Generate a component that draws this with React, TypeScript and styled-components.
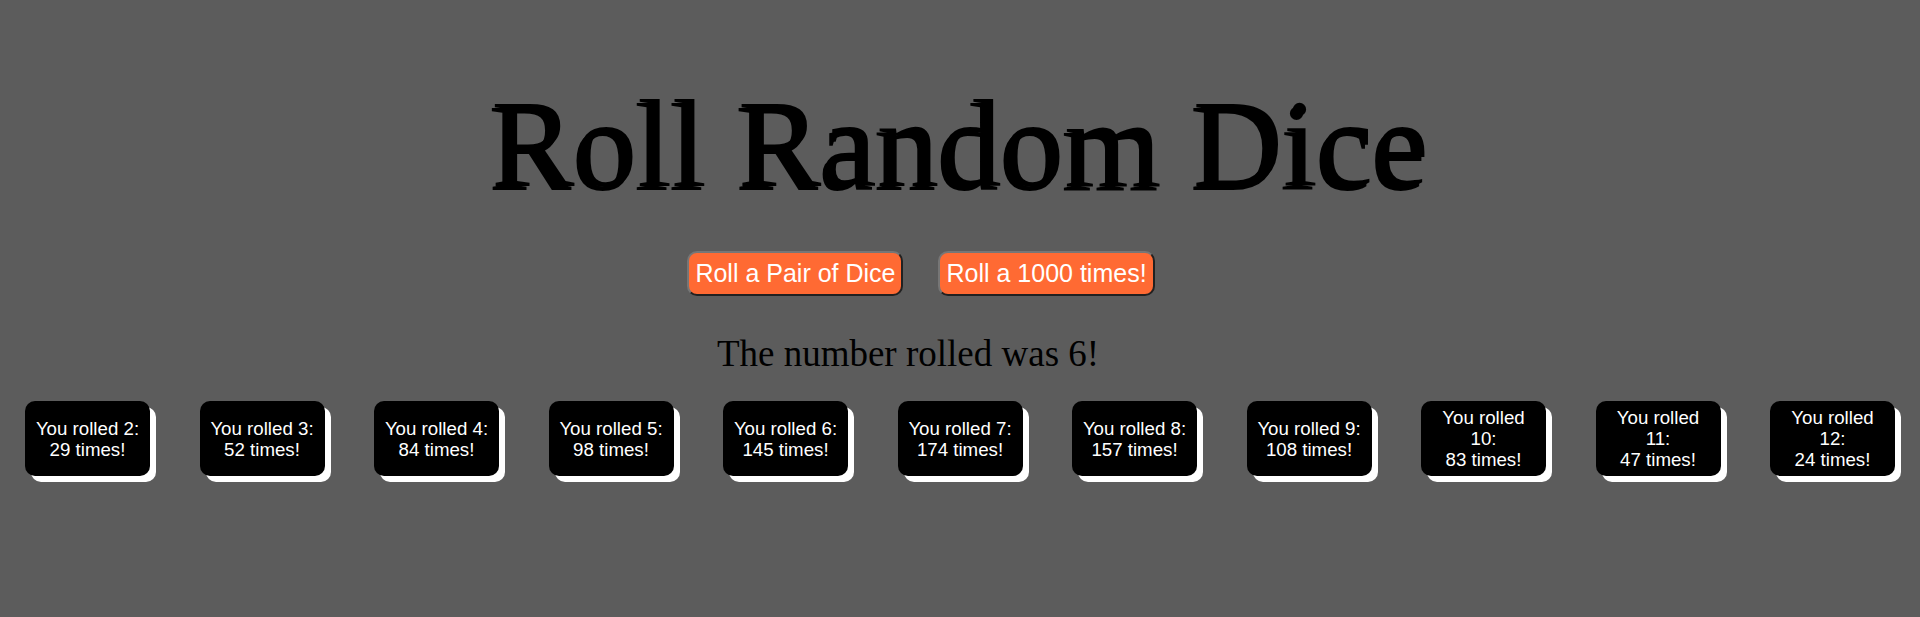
import styled, { createGlobalStyle } from "styled-components";

const GlobalStyle = createGlobalStyle`
  body {
    margin: 0;
    background-color: #5c5c5c;
    font-family: "Liberation Serif", "Times New Roman", serif;
  }
`;

const rolls: Array<{ sum: number; count: number }> = [
  { sum: 2, count: 29 },
  { sum: 3, count: 52 },
  { sum: 4, count: 84 },
  { sum: 5, count: 98 },
  { sum: 6, count: 145 },
  { sum: 7, count: 174 },
  { sum: 8, count: 157 },
  { sum: 9, count: 108 },
  { sum: 10, count: 83 },
  { sum: 11, count: 47 },
  { sum: 12, count: 24 },
];

const Page = styled.div`
  display: flex;
  flex-direction: column;
  height: 617px;
`;

const Title = styled.h1`
  font-size: 125px;
  font-weight: 400;
  line-height: 144px;
  margin: 72px 0 0;
  text-align: center;
  color: #000;
  text-shadow: -3px 4px 0 #000;
`;

const ButtonRow = styled.div`
  display: flex;
  justify-content: center;
  gap: 35px;
  margin-top: 35px;
  padding-right: 78px;
`;

const RollButton = styled.button`
  background-color: #ff6a33;
  border: 2px outset #767676;
  border-radius: 10px;
  color: white;
  font-family: "Liberation Sans", Arial, sans-serif;
  font-size: 25px;
  line-height: 29px;
  padding: 6px 6px;
  cursor: pointer;
`;

const Message = styled.p`
  font-size: 37px;
  margin: 37px 0 0;
  line-height: 42px;
  text-align: center;
  padding-right: 104px;
`;

const CardRow = styled.div`
  display: flex;
  align-items: flex-start;
  justify-content: space-between;
  padding: 0 25px;
  margin-top: 26px;
`;

const Card = styled.div`
  box-sizing: border-box;
  display: flex;
  align-items: center;
  justify-content: center;
  flex-shrink: 0;
  width: 125px;
  height: 75px;
  padding: 0 9px;
  background-color: #000;
  border-radius: 10px;
  box-shadow: 6px 6px 0 #fff;
  color: #fff;
  font-family: "Liberation Sans", Arial, sans-serif;
  font-size: 18.7px;
  line-height: 21px;
  text-align: center;
`;

const App = () => {
  return (
    <Page>
      <GlobalStyle />
      <Title>Roll Random Dice</Title>
      <ButtonRow>
        <RollButton>Roll a Pair of Dice</RollButton>
        <RollButton>Roll a 1000 times!</RollButton>
      </ButtonRow>
      <Message>The number rolled was 6!</Message>
      <CardRow>
        {rolls.map(({ sum, count }) => (
          <Card key={sum}>
            <span>
              You rolled {sum}:
              <br />
              {count} times!
            </span>
          </Card>
        ))}
      </CardRow>
    </Page>
  );
};

export default App;
